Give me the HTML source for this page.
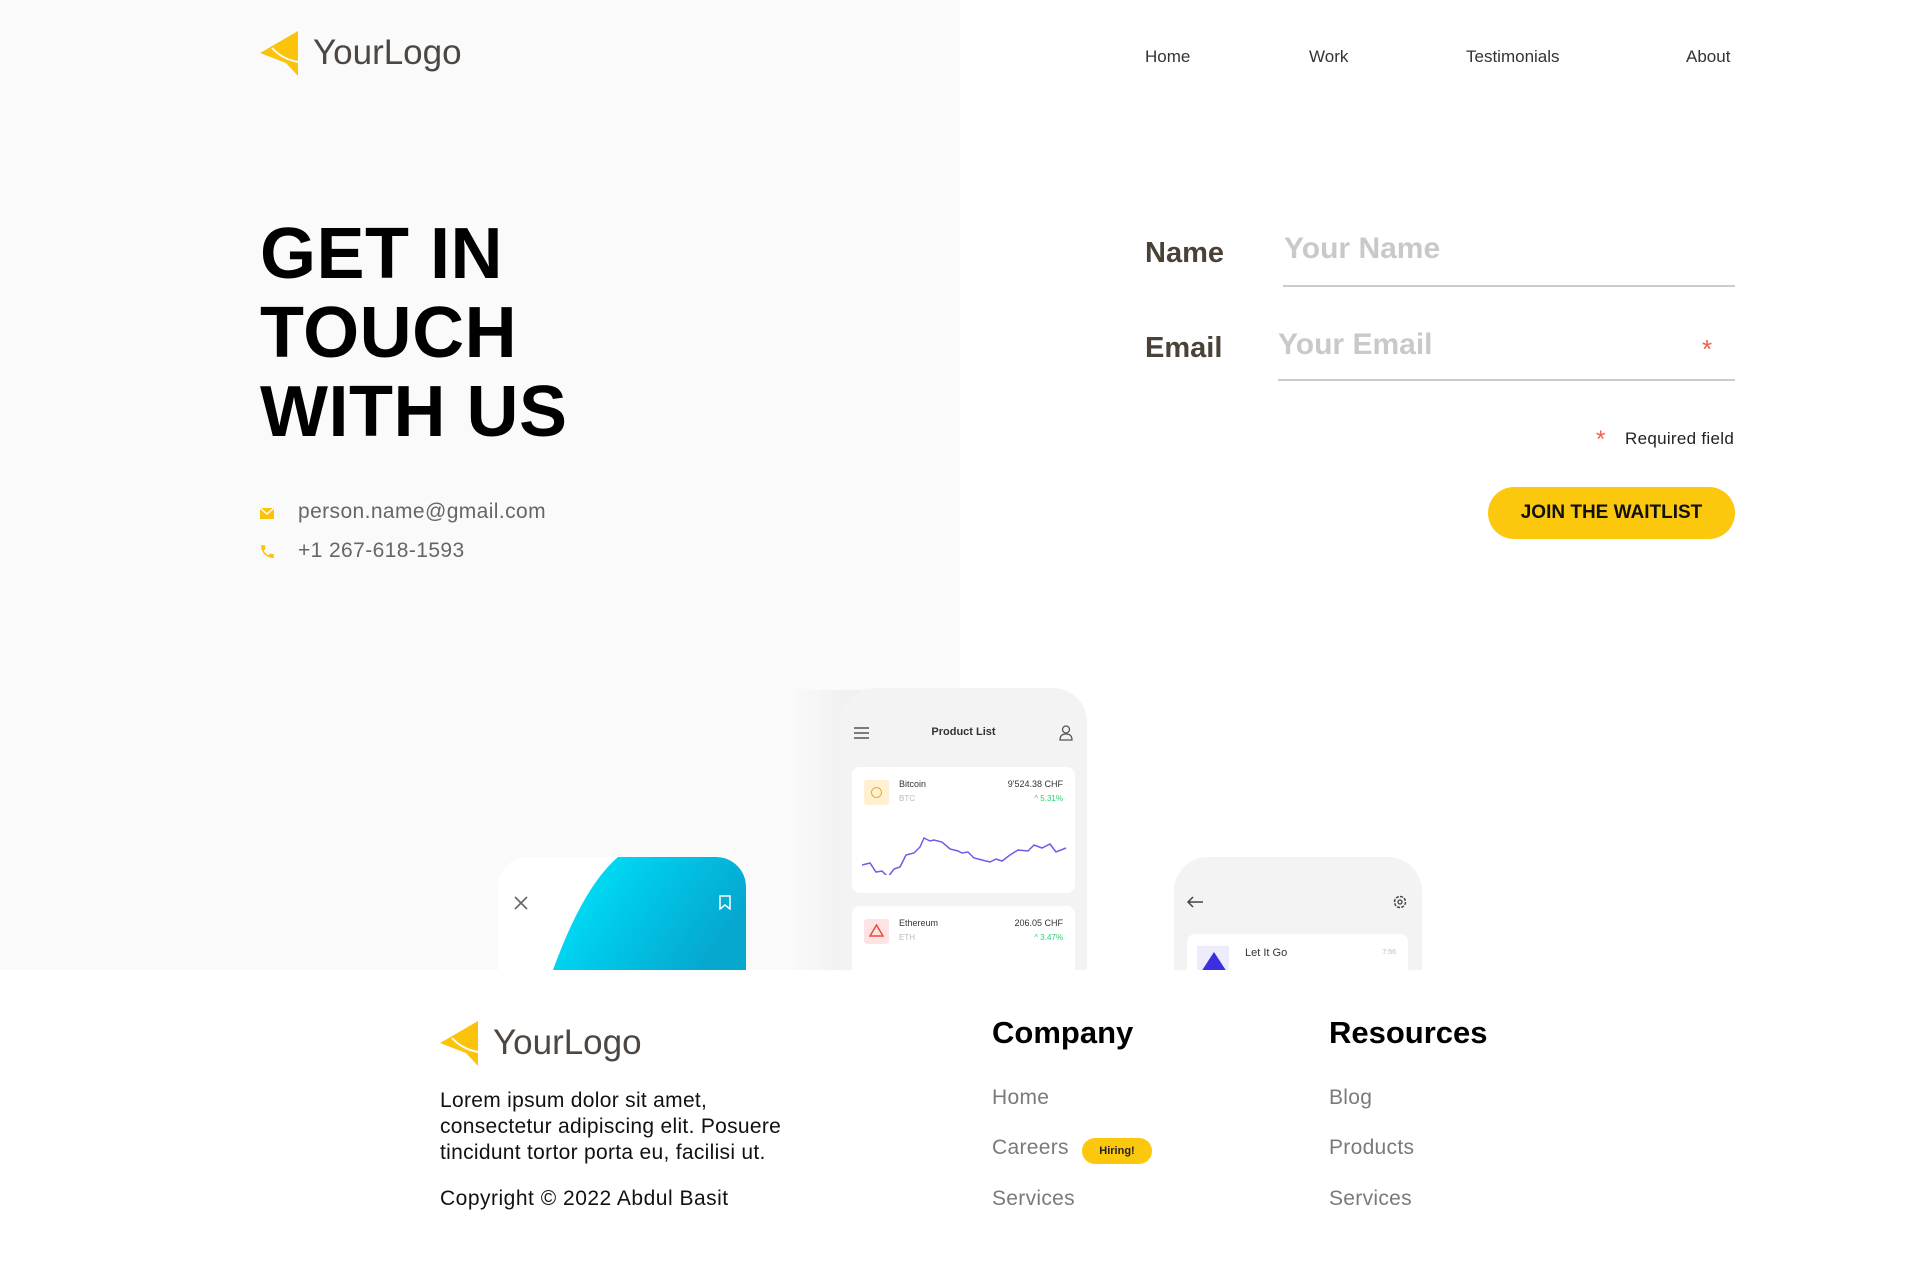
<!DOCTYPE html>
<html><head><meta charset="utf-8"><style>
*{margin:0;padding:0;box-sizing:border-box}
body{width:1920px;height:1262px;background:#fff;position:relative;overflow:hidden;font-family:"Liberation Sans",sans-serif}
.a{position:absolute;white-space:nowrap}
.left{position:absolute;left:0;top:0;width:960px;height:970px;background:#fafafa}
.nav{font-size:17px;color:#333;top:47px}
.lbl{font-size:29px;font-weight:bold;color:#4a4236;letter-spacing:0}
.ph{font-size:30px;font-weight:bold;color:#c9c9c9;letter-spacing:0}
.fl{font-size:21px;color:#7a7a7a;letter-spacing:0.3px}
.fh{font-size:31px;font-weight:bold;color:#000;letter-spacing:0}
</style></head><body>
<div class="left"></div>

<svg class="a" style="left:260px;top:31px" width="40" height="46" viewBox="0 0 40 46"><polygon points="0,22 38,0 38,45 26,32" fill="#fcc30b"/><path d="M12,17 Q22,28 38,31" stroke="#fafafa" stroke-width="2" fill="none"/></svg>
<div class="a" style="left:313px;top:33px;font-size:35px;color:#4e4640">YourLogo</div>

<div class="a nav" style="left:1145px">Home</div>
<div class="a nav" style="left:1309px">Work</div>
<div class="a nav" style="left:1466px">Testimonials</div>
<div class="a nav" style="left:1686px">About</div>

<div class="a" style="left:260px;top:215px;font-size:72px;line-height:79px;font-weight:bold;color:#000;letter-spacing:0.5px">GET IN<br>TOUCH<br>WITH US</div>

<svg class="a" style="left:260px;top:508px" width="14" height="11" viewBox="0 0 14 11"><rect width="14" height="11" fill="#fcc30b"/><path d="M0,0 L7,6 L14,0" stroke="#fafafa" stroke-width="1.5" fill="none"/></svg>
<div class="a" style="left:298px;top:500px;font-size:21px;color:#666;letter-spacing:0.4px">person.name@gmail.com</div>
<svg class="a" style="left:259px;top:543px" width="17" height="17" viewBox="0 0 24 24"><path d="M6.6 10.8c1.4 2.8 3.8 5.1 6.6 6.6l2.2-2.2c.3-.3.7-.4 1-.2 1.1.4 2.3.6 3.6.6.6 0 1 .4 1 1V20c0 .6-.4 1-1 1C10.6 21 3 13.4 3 4c0-.6.4-1 1-1h3.5c.6 0 1 .4 1 1 0 1.3.2 2.5.6 3.6.1.3 0 .7-.2 1z" fill="#fcc30b"/></svg>
<div class="a" style="left:298px;top:539px;font-size:21px;color:#666;letter-spacing:0.4px">+1 267-618-1593</div>

<div class="a lbl" style="left:1145px;top:237px">Name</div>
<div class="a ph" style="left:1284px;top:232px">Your Name</div>
<div class="a" style="left:1283px;top:285px;width:452px;height:2px;background:#ccc"></div>
<div class="a lbl" style="left:1145px;top:332px">Email</div>
<div class="a ph" style="left:1278px;top:328px">Your Email</div>
<div class="a" style="left:1702px;top:334px;font-size:26px;color:#f0604a">*</div>
<div class="a" style="left:1278px;top:379px;width:457px;height:2px;background:#ccc"></div>
<div class="a" style="left:1596px;top:426px;font-size:24px;color:#f0604a">*</div>
<div class="a" style="left:1625px;top:429px;font-size:17px;color:#222;letter-spacing:0.3px">Required field</div>
<div class="a" style="left:1488px;top:487px;width:247px;height:52px;border-radius:26px;background:#fcc80e;font-size:19px;font-weight:bold;color:#111;text-align:center;line-height:52px">JOIN THE WAITLIST</div>

<div class="a" style="left:790px;top:690px;width:140px;height:280px;background:linear-gradient(90deg,#fafafa,#e2e2e2)"></div>
<div class="a" style="left:840px;top:688px;width:247px;height:282px;background:#f3f3f3;border-radius:34px 34px 0 0;overflow:hidden">
  <svg class="a" style="left:14px;top:39px" width="15" height="12"><path d="M0,1H15M0,6H15M0,11H15" stroke="#555" stroke-width="1.5"/></svg>
  <div class="a" style="left:0;width:247px;text-align:center;top:38px;font-size:11px;font-weight:bold;color:#333">Product List</div>
  <svg class="a" style="left:219px;top:37px" width="14" height="16"><circle cx="7" cy="4.5" r="3.5" stroke="#555" fill="none" stroke-width="1.3"/><path d="M1,15 Q1,9 7,9 Q13,9 13,15Z" stroke="#555" fill="none" stroke-width="1.3"/></svg>
  <div class="a" style="left:12px;top:79px;width:223px;height:126px;background:#fff;border-radius:8px">
    <div class="a" style="left:12px;top:13px;width:25px;height:25px;background:#fff0d2;border-radius:3px"></div>
    <div class="a" style="left:19px;top:20px;width:11px;height:11px;border:1.5px solid #f5a623;border-radius:50%"></div>
    <div class="a" style="left:47px;top:12px;font-size:9px;color:#333">Bitcoin</div>
    <div class="a" style="left:47px;top:27px;font-size:8px;color:#bbb">BTC</div>
    <div class="a" style="right:12px;top:12px;font-size:9px;color:#333">9'524.38 CHF</div>
    <div class="a" style="right:12px;top:27px;font-size:8px;color:#2ecc71">^ 5.31%</div>
    <svg class="a" style="left:10px;top:58px" width="205" height="50"><path d="M0,40 L8,38 L14,47 L20,46 L26,52 L32,44 L38,42 L44,30 L52,28 L58,22 L62,13 L68,16 L72,15 L80,17 L88,24 L96,26 L100,28 L106,27 L112,33 L120,35 L128,37 L134,34 L140,36 L148,30 L156,25 L166,26 L172,20 L180,23 L188,19 L194,27 L204,23" stroke="#6c5ce7" stroke-width="1.5" fill="none"/></svg>
  </div>
  <div class="a" style="left:12px;top:218px;width:223px;height:80px;background:#fff;border-radius:8px">
    <div class="a" style="left:12px;top:13px;width:25px;height:25px;background:#fde3e3;border-radius:3px"></div>
    <svg class="a" style="left:17px;top:18px" width="15" height="13"><path d="M7.5,1 L14,12 L1,12Z" stroke="#e74c3c" fill="none" stroke-width="1.5"/></svg>
    <div class="a" style="left:47px;top:12px;font-size:9px;color:#333">Ethereum</div>
    <div class="a" style="left:47px;top:27px;font-size:8px;color:#bbb">ETH</div>
    <div class="a" style="right:12px;top:12px;font-size:9px;color:#333">206.05 CHF</div>
    <div class="a" style="right:12px;top:27px;font-size:8px;color:#2ecc71">^ 3.47%</div>
  </div>
</div>

<div class="a" style="left:498px;top:857px;width:248px;height:113px;background:#fff;border-radius:30px 30px 0 0;overflow:hidden">
  <svg class="a" style="left:0;top:0" width="248" height="113"><defs><linearGradient id="g" x1="0" y1="0" x2="1" y2="0.4"><stop offset="0" stop-color="#00ecff"/><stop offset="0.5" stop-color="#00c8e8"/><stop offset="1" stop-color="#06a8d0"/></linearGradient></defs><path d="M55,113 Q85,30 120,0 L218,0 Q248,0 248,30 L248,113Z" fill="url(#g)"/></svg>
  <svg class="a" style="left:16px;top:39px" width="14" height="14"><path d="M1,1L13,13M13,1L1,13" stroke="#666" stroke-width="1.6"/></svg>
  <svg class="a" style="left:221px;top:38px" width="12" height="15"><path d="M1,1H11V14L6,10L1,14Z" stroke="#fff" stroke-width="1.5" fill="none"/></svg>
</div>

<div class="a" style="left:1174px;top:857px;width:248px;height:113px;background:#f3f3f3;border-radius:34px 34px 0 0;overflow:hidden">
  <svg class="a" style="left:12px;top:39px" width="18" height="12"><path d="M17,6H2M7,1L2,6L7,11" stroke="#444" stroke-width="1.5" fill="none"/></svg>
  <svg class="a" style="left:218px;top:37px" width="16" height="16" viewBox="0 0 16 16"><circle cx="8" cy="8" r="5.5" stroke="#444" stroke-width="1.5" fill="none" stroke-dasharray="3 1.3"/><circle cx="8" cy="8" r="2" stroke="#444" stroke-width="1.3" fill="none"/></svg>
  <div class="a" style="left:13px;top:77px;width:221px;height:50px;background:#fff;border-radius:8px">
    <div class="a" style="left:10px;top:12px;width:32px;height:40px;background:#ececfc"></div>
    <svg class="a" style="left:14px;top:18px" width="26" height="20"><path d="M13,0 L26,20 L0,20Z" fill="#3d2ee0"/></svg>
    <div class="a" style="left:58px;top:13px;font-size:11px;color:#333">Let It Go</div>
    <div class="a" style="right:12px;top:15px;font-size:7px;color:#bbb">7:56</div>
  </div>
</div>

<svg class="a" style="left:440px;top:1021px" width="40" height="46" viewBox="0 0 40 46"><polygon points="0,22 38,0 38,45 26,32" fill="#fcc30b"/><path d="M12,17 Q22,28 38,31" stroke="#fff" stroke-width="2" fill="none"/></svg>
<div class="a" style="left:493px;top:1023px;font-size:35px;color:#4e4640">YourLogo</div>
<div class="a" style="left:440px;top:1088px;font-size:21px;line-height:26px;color:#111;letter-spacing:0.3px">Lorem ipsum dolor sit amet,<br>consectetur adipiscing elit. Posuere<br>tincidunt tortor porta eu, facilisi ut.</div>
<div class="a" style="left:440px;top:1187px;font-size:21px;color:#111;letter-spacing:0.5px">Copyright © 2022 Abdul Basit</div>

<div class="a fh" style="left:992px;top:1015px">Company</div>
<div class="a fl" style="left:992px;top:1086px">Home</div>
<div class="a fl" style="left:992px;top:1136px">Careers</div>
<div class="a" style="left:1082px;top:1138px;width:70px;height:26px;border-radius:13px;background:#fcc80e;font-size:11px;font-weight:bold;color:#222;text-align:center;line-height:26px">Hiring!</div>
<div class="a fl" style="left:992px;top:1187px">Services</div>

<div class="a fh" style="left:1329px;top:1015px">Resources</div>
<div class="a fl" style="left:1329px;top:1086px">Blog</div>
<div class="a fl" style="left:1329px;top:1136px">Products</div>
<div class="a fl" style="left:1329px;top:1187px">Services</div>
</body></html>
